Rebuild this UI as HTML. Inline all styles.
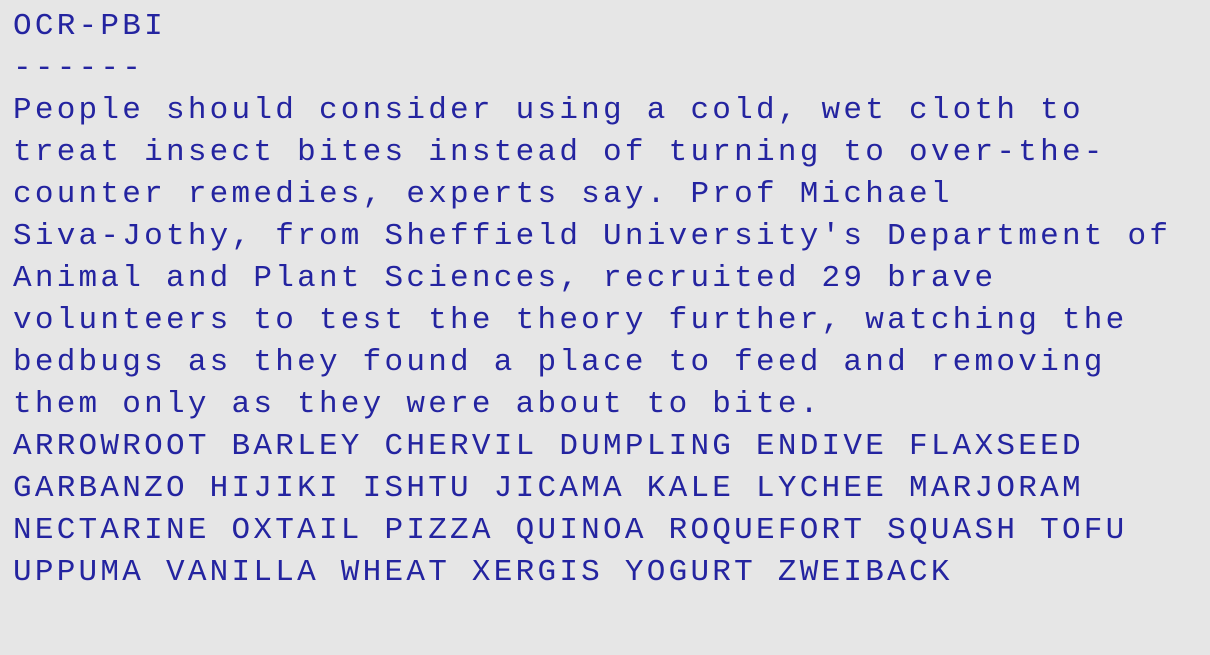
<!DOCTYPE html>
<html><head><meta charset="utf-8"><style>
html,body{margin:0;padding:0;background:#e6e6e6;width:1210px;height:655px;overflow:hidden}
pre{margin:0;padding:6px 0 0 13px;font-family:"Liberation Mono","DejaVu Sans Mono",monospace;font-size:31px;letter-spacing:3.25px;line-height:42px;color:#2424a0;font-weight:normal}
</style></head><body><pre>OCR-PBI
------
People should consider using a cold, wet cloth to
treat insect bites instead of turning to over-the-
counter remedies, experts say. Prof Michael
Siva-Jothy, from Sheffield University's Department of
Animal and Plant Sciences, recruited 29 brave
volunteers to test the theory further, watching the
bedbugs as they found a place to feed and removing
them only as they were about to bite.
ARROWROOT BARLEY CHERVIL DUMPLING ENDIVE FLAXSEED
GARBANZO HIJIKI ISHTU JICAMA KALE LYCHEE MARJORAM
NECTARINE OXTAIL PIZZA QUINOA ROQUEFORT SQUASH TOFU
UPPUMA VANILLA WHEAT XERGIS YOGURT ZWEIBACK</pre></body></html>
